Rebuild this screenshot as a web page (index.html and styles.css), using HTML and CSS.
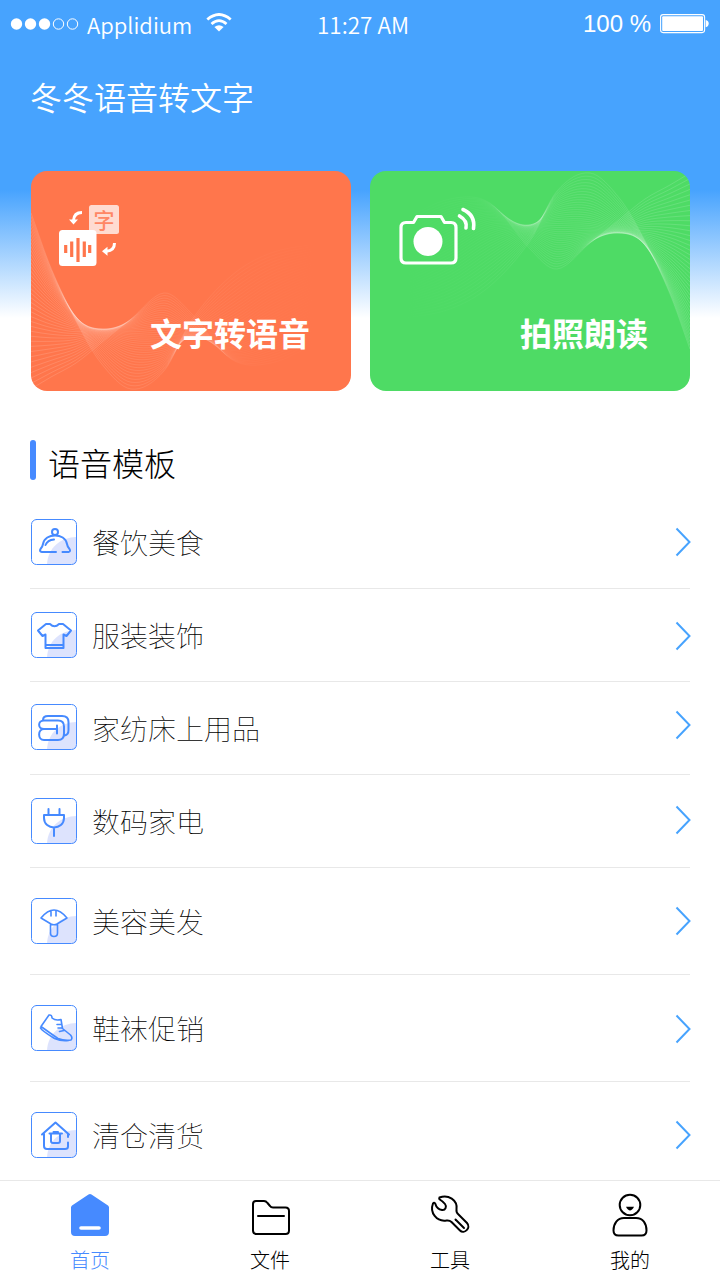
FILE: index.html
```html
<!DOCTYPE html>
<html lang="zh-CN">
<head>
  <meta charset="UTF-8" />
  <meta name="viewport" content="width=device-width, initial-scale=1" />
  <title>冬冬语音转文字</title>
  <link rel="stylesheet" href="styles.css">
</head>
<body>
  <div class="app">
    <div class="status-bar">
      <div class="carrier">
        <svg class="signal" width="70" height="14" viewBox="0 0 70 14">
          <g fill="#fff"><circle cx="6.5" cy="7" r="5.7"/><circle cx="20.5" cy="7" r="5.7"/><circle cx="34.5" cy="7" r="5.7"/></g>
          <g fill="none" stroke="#fff"><circle cx="48.5" cy="7" r="5.2"/><circle cx="62.5" cy="7" r="5.2"/></g>
        </svg>
        <span>Applidium</span>
        <svg class="wifi" width="26" height="19" viewBox="0 0 26 19">
          <g fill="none" stroke="#fff" stroke-width="2.8">
            <path d="M1.3 6.5Q13-3.6 24.7 6.5"/>
            <path d="M5.5 11Q13 4.3 20.5 11"/>
          </g>
          <path d="M8.4 14Q13 10.3 17.6 14L13 18.5z" fill="#fff"/>
        </svg>
      </div>
      <div class="time">11:27 AM</div>
      <div class="battery">
        <span>100 %</span>
        <svg width="50" height="20" viewBox="0 0 50 20">
          <rect x="1.6" y="0.6" width="44" height="18" rx="2.5" fill="none" stroke="#fff" stroke-width="1.1"/>
          <rect x="3.2" y="2.2" width="40.8" height="14.8" rx="1" fill="#fff"/>
          <path d="M46.700 6q3 .6 3 3.600t-3 3.600z" fill="#fff"/>
        </svg>
      </div>
    </div>

    <h1>冬冬语音转文字</h1>

    <div class="cards">
      <div class="card card-speech">
        <svg class="waves" viewBox="0 0 320 220"></svg>
        <svg class="card-icon" width="64" height="64" viewBox="0 0 64 64">
          <rect x="30" y="1" width="30" height="29" rx="2.5" fill="#ffdbd1"/>
          <text x="45" y="24" class="icon-char">字</text>
          <rect x="0" y="26" width="37.5" height="36" rx="3.5" fill="#fff"/>
          <g stroke="#ff764c" stroke-width="3.2">
            <path d="M6.700 41v8M12.700 37.500v15.500M19 34v24M25.300 37.500v15.500M30.700 41v8"/>
          </g>
          <g fill="none" stroke="#fff" stroke-width="3">
            <path d="M23 8.500q-8 0-8.500 8"/>
            <path d="M55.500 39q0 7.500-8 8.300"/>
          </g>
          <path d="M10 15.500h9l-4.500 5zM48.500 42.700v9l-5.500-4.500z" fill="#fff"/>
        </svg>
        <div class="card-title">文字转语音</div>
      </div>
      <div class="card card-photo">
        <svg class="waves flipped" viewBox="0 0 320 220"></svg>
        <svg class="card-icon" width="80" height="64" viewBox="0 0 80 64">
          <path d="M7 18.500h7.500L18 12.500h24l3.500 6H52q5 0 5 5v30.500q0 5-5 5H7q-5 0-5-5V23.500q0-5 5-5z" fill="none" stroke="#fff" stroke-width="3.200" stroke-linejoin="round"/>
          <circle cx="29" cy="37.500" r="14.500" fill="#fff"/>
          <g fill="none" stroke="#fff" stroke-width="3.600" stroke-linecap="round">
            <path d="M60.500 12q8 4.500 6.500 12"/>
            <path d="M64 5.500Q76.500 11 74.500 24.500"/>
          </g>
        </svg>
        <div class="card-title">拍照朗读</div>
      </div>
    </div>

    <h2>语音模板</h2>

    <ul class="list">
      <li>
        <svg class="icon" viewBox="0 0 46 46">
          <path class="blob" d="M16 45.500C17 28 30 18.500 45.500 18v24q0 3.500-3.500 3.500z"/>
          <rect class="frame" x=".5" y=".5" width="45" height="45" rx="5"/>
          <circle cx="24" cy="13" r="3"/>
          <path d="M25 33H11q-3-.5-1.500-3 2-2 2.500-5C14 13.500 34 13.500 36 25q.5 3 2.500 5 1.500 2.500-1 3h-6M14.500 26q2-5 8.500-5.500"/>
        </svg>
        <span class="label">餐饮美食</span>
        <svg class="arrow" viewBox="0 0 16 30"><path d="M1.500 1.500L14.500 15l-13 13.500"/></svg>
      </li>
      <li>
        <svg class="icon" viewBox="0 0 46 46">
          <path class="blob" d="M16 45.500C17 28 30 18.500 45.500 18v24q0 3.500-3.500 3.500z"/>
          <rect class="frame" x=".5" y=".5" width="45" height="45" rx="5"/>
          <path d="M15 12h4q4.500 4.500 9 0h4l8 6.500-4.500 5.500-3-1.500V36h-18V22.500l-3 1.500L7 18.500zM16 33h15"/>
        </svg>
        <span class="label">服装装饰</span>
        <svg class="arrow down" viewBox="0 0 16 30"><path d="M1.500 1.500L14.500 15l-13 13.500"/></svg>
      </li>
      <li>
        <svg class="icon up" viewBox="0 0 46 46">
          <path class="blob" d="M16 45.500C17 28 30 18.500 45.500 18v24q0 3.500-3.500 3.500z"/>
          <rect class="frame" x=".5" y=".5" width="45" height="45" rx="5"/>
          <path d="M26 25H13c-6.500 0-6.500-8.500 0-8.500h14q6 0 6 6v7q0 6.500-6 6.500H13c-6.500 0-6.500-11 0-11M26 21.500v8M12 16q0-4 5-4h14q6.500 0 6.500 6v8q0 5-4 5.500"/>
        </svg>
        <span class="label">家纺床上用品</span>
        <svg class="arrow up3" viewBox="0 0 16 30"><path d="M1.500 1.500L14.500 15l-13 13.500"/></svg>
      </li>
      <li>
        <svg class="icon" viewBox="0 0 46 46">
          <path class="blob" d="M16 45.500C17 28 30 18.500 45.500 18v24q0 3.500-3.500 3.500z"/>
          <rect class="frame" x=".5" y=".5" width="45" height="45" rx="5"/>
          <path d="M13 17h20v3c0 12.500-20 12.500-20 0zM17.500 11v6M28.500 11v6M23 29.500V38"/>
        </svg>
        <span class="label">数码家电</span>
        <svg class="arrow up1" viewBox="0 0 16 30"><path d="M1.500 1.500L14.500 15l-13 13.500"/></svg>
      </li>
      <li class="tall">
        <svg class="icon thin" viewBox="0 0 46 46">
          <path class="blob" d="M16 45.500C17 28 30 18.500 45.500 18v24q0 3.500-3.500 3.500z"/>
          <rect class="frame" x=".5" y=".5" width="45" height="45" rx="5"/>
          <path d="M10 20Q23 4 36 20L26 26q-3 1.500-6 0zM20 13v5M25 13v5M19.500 26.500V35q0 3.500 3.500 3.500t3.500-3.500v-8.500"/>
        </svg>
        <span class="label">美容美发</span>
        <svg class="arrow" viewBox="0 0 16 30"><path d="M1.500 1.500L14.500 15l-13 13.500"/></svg>
      </li>
      <li class="tall">
        <svg class="icon thin" viewBox="0 0 46 46">
          <path class="blob" d="M16 45.500C17 28 30 18.500 45.500 18v24q0 3.500-3.500 3.500z"/>
          <rect class="frame" x=".5" y=".5" width="45" height="45" rx="5"/>
          <path d="M10 21.500l8-11.500q3-.5 3 3 3.500 3 9 1.500l1.500 9 8 6.500q2.500 3 .5 5-6.500 1-13-1.500Q19 28 10 21.500zM9.500 23q1 2.500 14 10.500 7 3 14 2M26 19.500h4.500M27 23h4.500M28.500 26.500l4.500-1"/>
        </svg>
        <span class="label">鞋袜促销</span>
        <svg class="arrow down" viewBox="0 0 16 30"><path d="M1.500 1.500L14.500 15l-13 13.500"/></svg>
      </li>
      <li class="tall">
        <svg class="icon" viewBox="0 0 46 46">
          <path class="blob" d="M16 45.500C17 28 30 18.500 45.500 18v24q0 3.500-3.500 3.500z"/>
          <rect class="frame" x=".5" y=".5" width="45" height="45" rx="5"/>
          <path d="M11 22.500l13.500-12L38 22.500M13 22v12q0 3 3 3h18q3 0 3-2.500v-4M37 22.500v2.500M18.500 21.500H31M22.500 20h4.500M20 22v7q0 2 2 2h5q2 0 2-2v-7"/>
        </svg>
        <span class="label">清仓清货</span>
        <svg class="arrow" viewBox="0 0 16 30"><path d="M1.500 1.500L14.500 15l-13 13.500"/></svg>
      </li>
    </ul>

    <div class="tab-bar">
      <div class="tab active">
        <svg width="44" height="46" viewBox="0 0 44 46">
          <path d="M20.500 1.600q1.500-1 3 0L40 12.500q1 .8 1 2V39q0 4-4 4H7q-4 0-4-4V14.500q0-1.200 1-2z" fill="#468aff"/>
          <path d="M13 35h18" stroke="#fff" stroke-width="3.600" stroke-linecap="round"/>
        </svg>
        <span>首页</span>
      </div>
      <div class="tab">
        <svg width="44" height="46" viewBox="0 0 44 46">
          <path d="M8 8h8q2 0 3.500 2l2.500 3q1 1.500 3 1.500H37.500q3.500 0 3.500 3.500v19.500q0 3.500-3.500 3.500H8.500q-3.500 0-3.500-3.500V11q0-3 3-3zM10 23h26" class="line"/>
        </svg>
        <span>文件</span>
      </div>
      <div class="tab">
        <svg width="44" height="46" viewBox="0 0 44 46">
          <path d="M11.500 4.500C20 1 30 7 28.500 16.500q-.5 3 2 5L39 30c4.500 5-3 11.500-7 7.500L23.500 29q-2-2-5-1.500C8.500 29 1.500 19.500 5 10.500q1-1.500 2.200 0c1 3.500 3.500 6 6.800 6.500 3.500.5 5-3.500 3-6q-2-2.500-5.200-4.500-1.200-1 0-2z" class="line"/>
          <path d="M27.500 26.500l8.500 8.500" class="line"/>
        </svg>
        <span>工具</span>
      </div>
      <div class="tab">
        <svg width="44" height="46" viewBox="0 0 44 46">
          <circle cx="22" cy="12" r="10.300" class="line"/>
          <path d="M18 13.800h8q-4 7.500-8 0z"/>
          <path d="M16 25h12c7 0 10.500 5.500 10.500 12.500q0 5-5 5h-23q-5 0-5-5C5.500 30.500 9.500 25 16 25z" class="line"/>
        </svg>
        <span>我的</span>
      </div>
    </div>
  </div>

  <script src="waves.js"></script>
</body>
</html>
```
FILE: styles.css
```css
body {
  font-family: "Noto Sans CJK SC", sans-serif;
  margin: 0;
  padding: 0;
  background: #fff;
}

.app {
  display: flex;
  flex-direction: column;
  width: 720px;
  height: 1280px;
  overflow: hidden;
  background: linear-gradient(#47a3fe 0, #47a3fe 190px, #fff 318px);
}

.status-bar {
  display: flex;
  justify-content: space-between;
  align-items: center;
  height: 47px;
  padding: 0 11px 0 10px;
  color: #fff;
  font-size: 22px;
  line-height: 46px;
}

.carrier, .battery {
  display: flex;
  align-items: center;
  width: 260px;
}

.carrier {
  font-weight: 350;
}

.signal {
  margin-right: 7px;
}

.wifi {
  margin: 0 0 3px 14px;
}

.time {
  font-size: 22.5px;
  font-weight: 350;
  margin-left: 7px;
}

.battery {
  justify-content: flex-end;
  font-family: "Liberation Sans", Arial, sans-serif;
  font-size: 24px;
}

.battery svg {
  margin-left: 8px;
}

h1 {
  margin: 25px 0 0 30px;
  height: 48px;
  line-height: 48px;
  font-size: 32px;
  font-weight: 350;
  color: #fff;
}

.cards {
  display: flex;
  gap: 19px;
  margin: 51px 30px 0 31px;
}

.card {
  position: relative;
  display: flex;
  flex-direction: column;
  justify-content: space-between;
  box-sizing: border-box;
  width: 320px;
  height: 220px;
  padding: 33px 41px 35px 28px;
  border-radius: 16px;
  overflow: hidden;
}

.card-speech {
  background: #ff764c;
}

.card-photo {
  padding: 33px 42px 35px 29px;
  background: #4edb65;
}

.waves {
  position: absolute;
  left: 0;
  top: 0;
  width: 320px;
  height: 220px;
}

.waves path {
  fill: none;
  stroke-width: 0.7;
}

.flipped {
  transform: rotate(180deg);
}

.card-icon, .card-title {
  position: relative;
}

.card-icon {
  overflow: visible;
}

.icon-char {
  font-size: 21px;
  font-weight: 500;
  text-anchor: middle;
  fill: #ff8765;
}

.card-title {
  color: #fff;
  font-size: 32px;
  font-weight: 700;
  line-height: 48px;
  text-align: right;
}

h2 {
  display: flex;
  align-items: center;
  margin: 49px 0 0 30px;
  height: 40px;
  font-size: 32px;
  font-weight: 300;
  line-height: 44px;
  color: #000;
}

h2::before {
  content: "";
  width: 6px;
  height: 40px;
  margin: -4px 12px 0 0;
  border-radius: 3px;
  background: #468aff;
}

h2 {
  margin-top: 47px;
  padding-top: 4px;
}

.list {
  flex: 1;
  min-height: 0;
  margin: 14px 30px 0;
  padding: 0;
  list-style: none;
}

.list li {
  display: flex;
  align-items: center;
  box-sizing: border-box;
  height: 93px;
  border-bottom: 1px solid #e8e8e8;
}

.list li.tall {
  height: 107px;
}

.icon {
  width: 46px;
  height: 46px;
  margin-left: 1px;
  fill: none;
  stroke: #468aff;
  stroke-width: 2;
  stroke-linecap: round;
  stroke-linejoin: round;
}

.icon.thin {
  stroke-width: 1.6;
}

.icon.up {
  margin-bottom: 2px;
}

.icon .frame {
  stroke-width: 1;
}

.icon .blob {
  fill: #dde3fd;
  stroke: none;
}

.label {
  flex: 1;
  margin-left: 15px;
  font-size: 28px;
  font-weight: 100;
  line-height: 42px;
  color: #000;
}

.arrow {
  width: 16px;
  height: 30px;
  margin-right: -1px;
  fill: none;
  stroke: #47a3fe;
  stroke-width: 2;
}

.arrow.down {
  margin-top: 2px;
}

.arrow.up1 {
  margin-bottom: 2px;
}

.arrow.up3 {
  margin-bottom: 6px;
}

.tab-bar {
  display: flex;
  box-sizing: border-box;
  height: 100px;
  border-top: 1px solid #e8e8e8;
  background: #fff;
  z-index: 1;
}

.tab {
  flex: 1;
  display: flex;
  flex-direction: column;
  align-items: center;
  padding-top: 12px;
  font-size: 20px;
  font-weight: 300;
  line-height: 30px;
  color: #000;
}

.tab span {
  margin-top: 6px;
}

.tab.active {
  color: #468aff;
}

.line {
  fill: none;
  stroke: #000;
  stroke-width: 2;
  stroke-linecap: round;
  stroke-linejoin: round;
}
```
FILE: waves.js
```javascript
// heights of the first, middle and last line at each x
const xs = [0, 20, 45, 70, 100, 133, 160, 200, 240, 290];
const first = [42, 97, 150, 192, 218, 200, 150, 105, 82, 72];
const middle = [110, 122, 132, 136, 150, 172, 186, 180, 145, 110];
const last = [218, 206, 192, 172, 148, 122, 142, 188, 192, 170];
const count = 40;

function linePath(t) {
  const ys = xs.map((x, i) =>
    (1 - t) * (1 - t) * first[i] + 2 * t * (1 - t) * middle[i] + t * t * last[i]);
  let d = `M${xs[0]} ${ys[0]}`;
  for (let i = 0; i < xs.length - 1; i++) {
    const a = Math.max(i - 1, 0);
    const b = Math.min(i + 2, xs.length - 1);
    const w = xs[i + 1] - xs[i];
    const s1 = (ys[i + 1] - ys[a]) / (xs[i + 1] - xs[a]);
    const s2 = (ys[b] - ys[i]) / (xs[b] - xs[i]);
    d += `C${xs[i] + w / 3} ${ys[i] + s1 * w / 3} ${xs[i + 1] - w / 3} ${ys[i + 1] - s2 * w / 3} ${xs[i + 1]} ${ys[i + 1]}`;
  }
  return d;
}

document.querySelectorAll('.waves').forEach((svg, n) => {
  let html = `<defs><linearGradient id="fade${n}" gradientUnits="userSpaceOnUse" x1="0" x2="290" y1="0" y2="0">
    <stop offset="0" stop-color="#fff" stop-opacity="0.2"/>
    <stop offset="0.5" stop-color="#fff" stop-opacity="0.12"/>
    <stop offset="0.75" stop-color="#fff" stop-opacity="0.04"/>
    <stop offset="1" stop-color="#fff" stop-opacity="0"/>
  </linearGradient></defs>`;
  for (let i = 0; i < count; i++) {
    html += `<path stroke="url(#fade${n})" d="${linePath(i / (count - 1))}"/>`;
  }
  svg.innerHTML = html;
});
```
